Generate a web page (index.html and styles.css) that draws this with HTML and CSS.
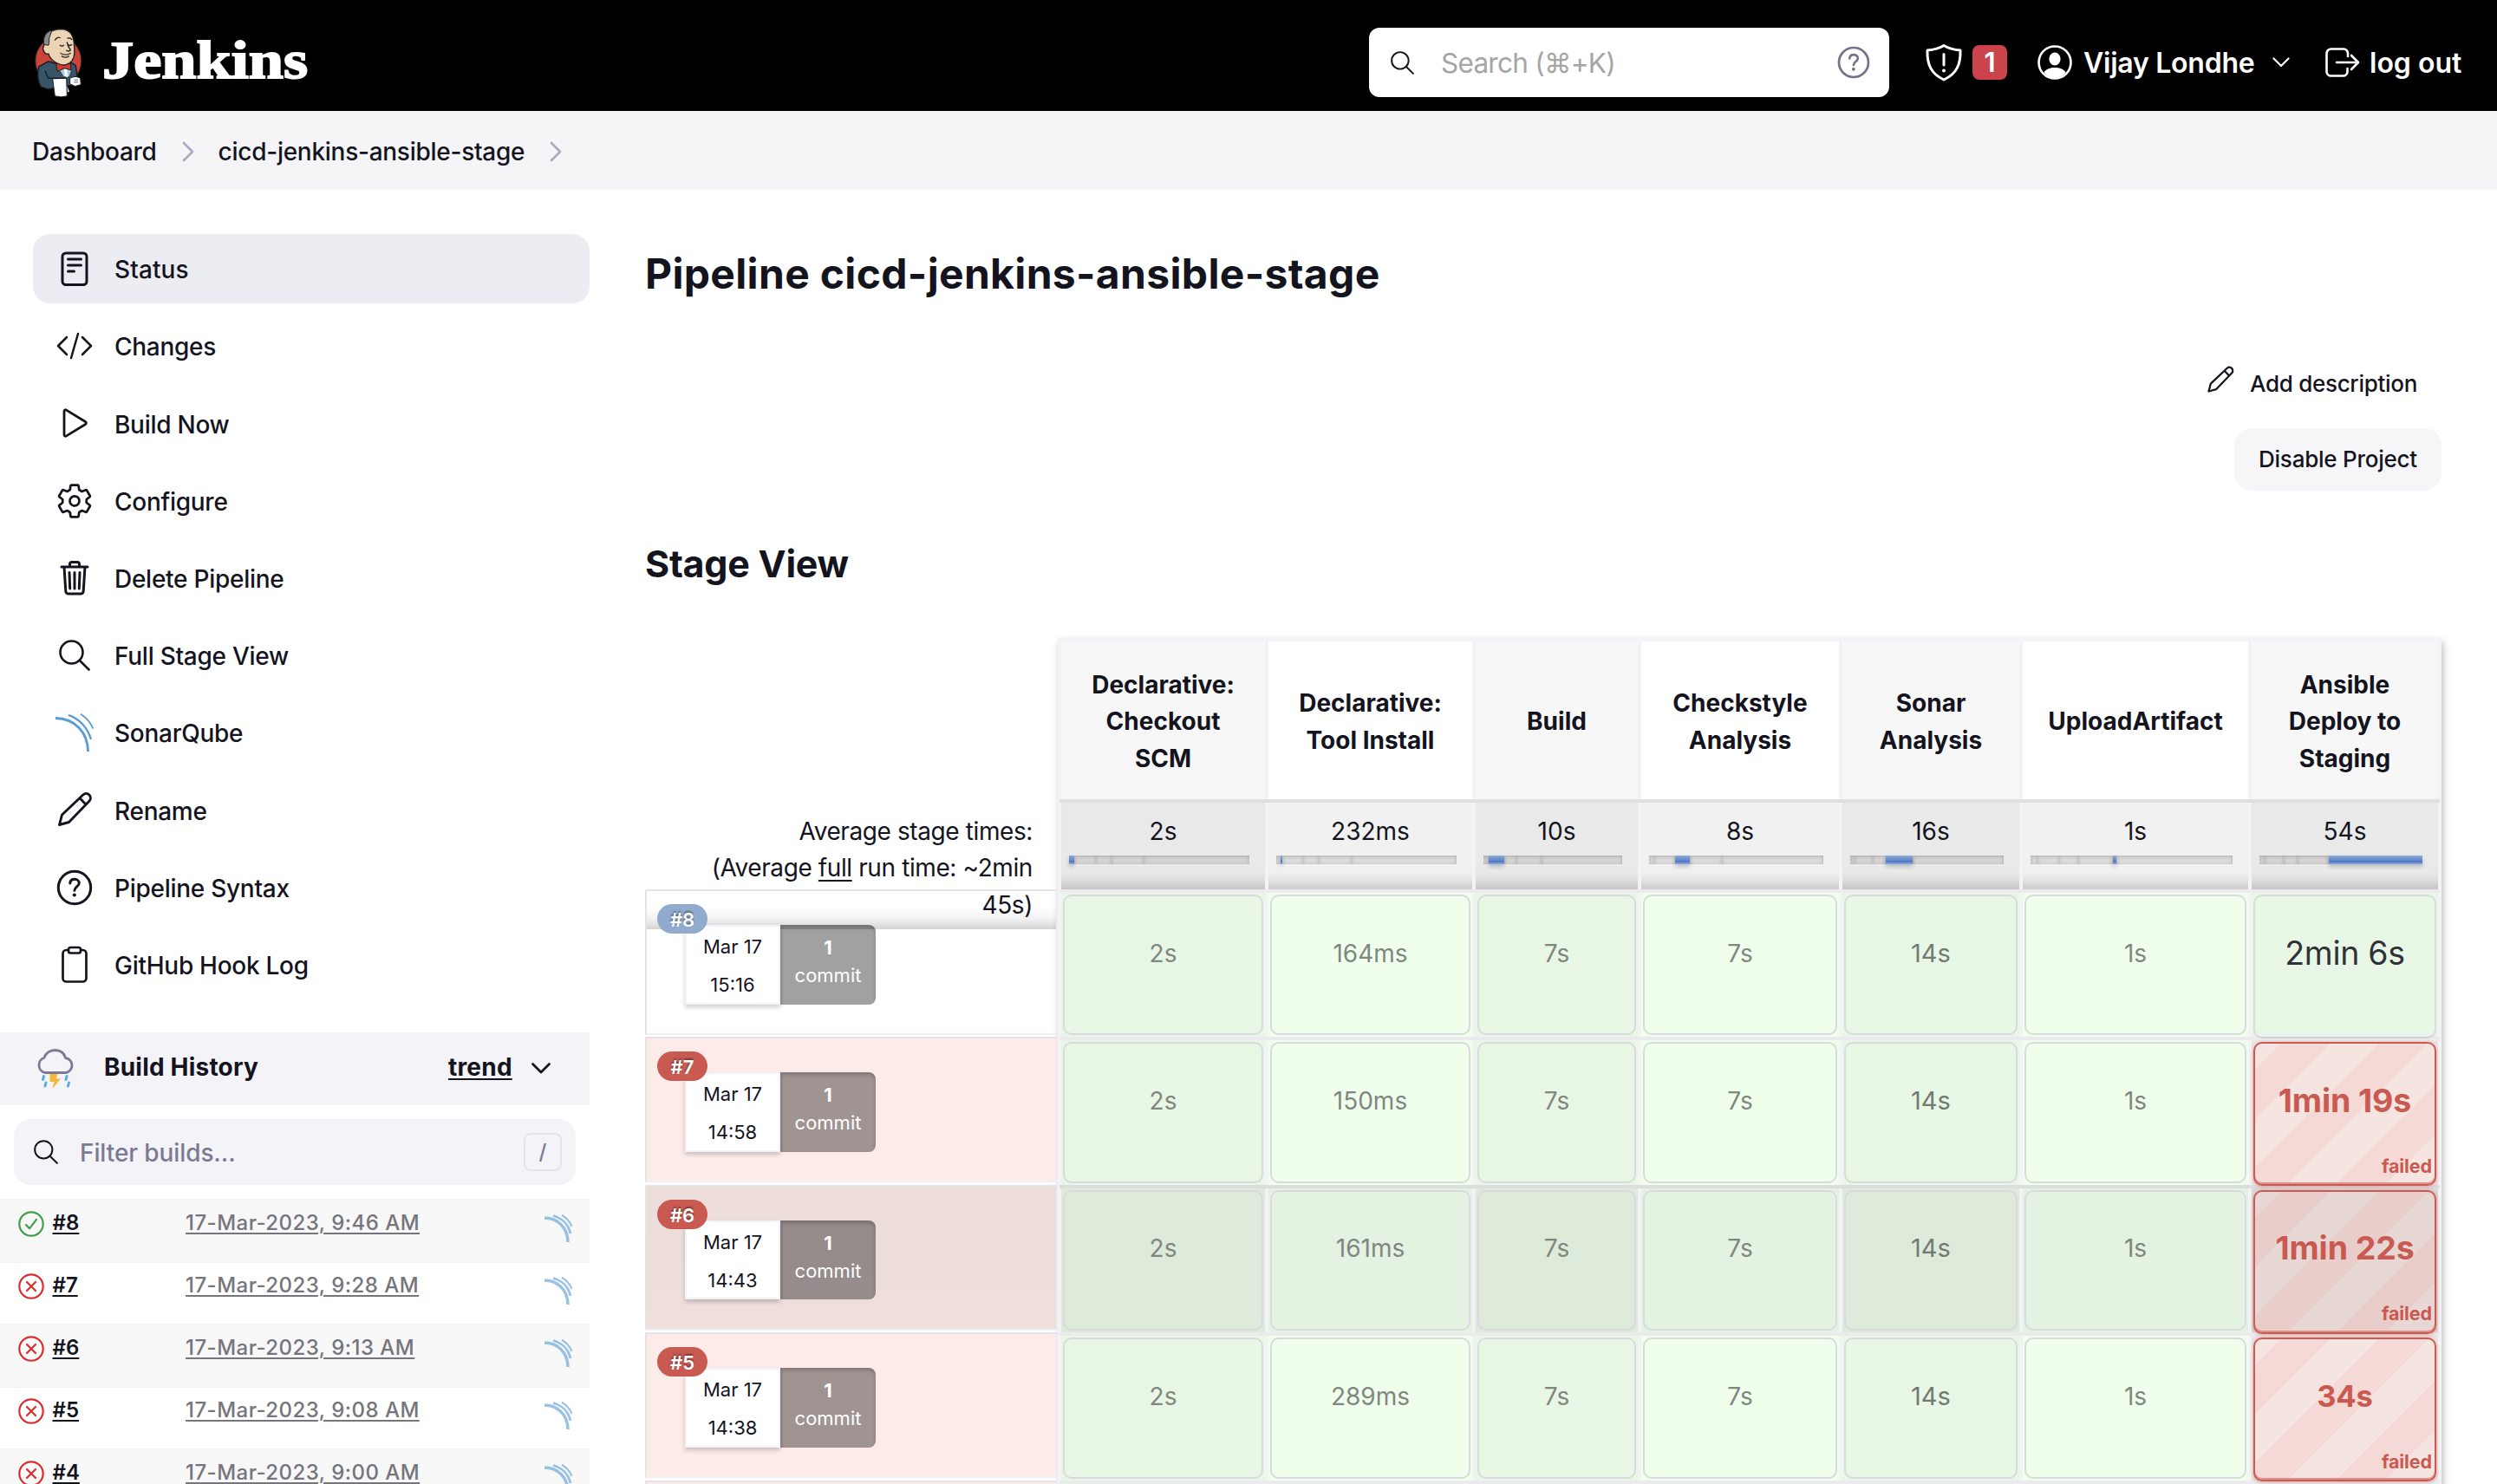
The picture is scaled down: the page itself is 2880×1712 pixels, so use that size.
FILE: index.html
```html
<!DOCTYPE html>
<html lang="en">
<head>
<meta charset="utf-8">
<title>cicd-jenkins-ansible-stage [Jenkins]</title>
<link rel="stylesheet" href="styles.css">
</head>
<body>
<svg class="sprite" aria-hidden="true">
  <symbol id="i-search" viewBox="0 0 36 36"><g fill="none" stroke="currentColor" stroke-width="2.6" stroke-linecap="round"><circle cx="14.5" cy="14.5" r="13"/><path d="M24 24l10.500 10.500"/></g></symbol>
  <symbol id="i-doc" viewBox="0 0 44 44"><g fill="none" stroke="currentColor" stroke-width="3" stroke-linecap="round"><rect x="8" y="4" width="28" height="36.500" rx="4"/><path d="M14.500 11h15M14.500 18h15M14.500 25h7"/></g></symbol>
  <symbol id="i-code" viewBox="0 0 44 44"><path fill="none" stroke="currentColor" stroke-width="2.500" stroke-linecap="round" stroke-linejoin="round" d="M13 12L3 22l10 10M31 12l10 10-10 10M26 8l-8 28"/></symbol>
  <symbol id="i-play" viewBox="0 0 44 44"><path fill="none" stroke="currentColor" stroke-width="2.800" stroke-linejoin="round" d="M10 8.500v27c0 1.600 1.400 2.100 2.600 1.400L34.500 23.500c1.200-.8 1.200-2.200 0-3L12.600 7.100C11.400 6.400 10 6.900 10 8.500z"/></symbol>
  <symbol id="i-gear" viewBox="0 0 512 512"><path fill="none" stroke="currentColor" stroke-linecap="round" stroke-linejoin="round" stroke-width="32" d="M262.290 192.310a64 64 0 1057.400 57.400 64.130 64.130 0 00-57.400-57.400zM416.390 256a154.340 154.340 0 01-1.530 20.790l45.210 35.460a10.810 10.810 0 012.450 13.750l-42.770 74a10.810 10.810 0 01-13.140 4.590l-44.900-18.080a16.110 16.110 0 00-15.170 1.750A164.480 164.480 0 01325 400.800a15.940 15.940 0 00-8.820 12.140l-6.730 47.890a11.080 11.080 0 01-10.680 9.170h-85.540a11.110 11.110 0 01-10.690-8.870l-6.720-47.820a16.070 16.070 0 00-9-12.220 155.300 155.300 0 01-21.460-12.570 16 16 0 00-15.110-1.710l-44.890 18.070a10.810 10.810 0 01-13.140-4.580l-42.770-74a10.800 10.800 0 012.450-13.750l38.210-30a16.050 16.050 0 006-14.080c-.36-4.170-.58-8.330-.58-12.500s.21-8.270.58-12.350a16 16 0 00-6.070-13.940l-38.190-30A10.810 10.810 0 0149.480 186l42.770-74a10.810 10.810 0 0113.140-4.590l44.900 18.080a16.110 16.110 0 0015.170-1.750A164.480 164.480 0 01187 111.200a15.940 15.940 0 008.820-12.140l6.730-47.890A11.080 11.080 0 01213.230 42h85.540a11.110 11.110 0 0110.690 8.870l6.720 47.820a16.070 16.070 0 009 12.220 155.300 155.300 0 0121.460 12.570 16 16 0 0015.110 1.710l44.890-18.070a10.810 10.810 0 0113.140 4.580l42.770 74a10.800 10.800 0 01-2.450 13.750l-38.210 30a16.050 16.050 0 00-6.050 14.080c.33 4.140.55 8.300.55 12.470z"/></symbol>
  <symbol id="i-trash" viewBox="0 0 44 44"><path fill="none" stroke="currentColor" stroke-width="3" stroke-linecap="round" stroke-linejoin="round" d="M10 9l1.800 28a3 3 0 003 3h14.400a3 3 0 003-3L34 9M7 9h30M22 15.500v18.500M16 15.500l.7 18.500M28 15.500l-.7 18.500M16.500 9V6a2.500 2.500 0 012.500-2.500h6A2.500 2.500 0 0127.500 6v3"/></symbol>
  <symbol id="i-sonar" viewBox="0 0 44 44"><g fill="none" stroke="#5a9bd5"><path stroke-width="2.800" d="M0 5.500C22 5.500 37.500 22 37.500 44"/><path stroke-width="2.300" d="M15 1.800C27 6 37 16 41 30"/><path stroke-width="1.800" d="M29 .8C35.500 5 40.500 10.500 43.200 17.500"/></g></symbol>
  <symbol id="i-wave" viewBox="0 0 32 32"><g fill="none" stroke="#6fa9da"><path stroke-width="3.400" d="M0 4C15 4 27 15.500 27 32"/><path stroke-width="2.800" d="M10 1.500C20 4 27.500 11.500 30 22"/><path stroke-width="2.200" d="M20 .8C25.500 4 29.500 8.500 31.500 14"/></g></symbol>
  <symbol id="i-pencil" viewBox="0 0 44 44"><path fill="none" stroke="currentColor" stroke-width="2.900" stroke-linecap="round" stroke-linejoin="round" d="M4.500 39.500L7.500 28 32 4.800c2-1.800 5-1.700 6.900.2s2 5 .2 6.900L15.500 36.500zM28 8.800l7 7.200"/></symbol>
  <symbol id="i-help" viewBox="0 0 44 44"><circle cx="22" cy="22" r="18.700" fill="none" stroke="currentColor" stroke-width="3"/><path fill="none" stroke="currentColor" stroke-width="3" stroke-linecap="round" stroke-linejoin="round" d="M16.800 17c.2-3 2.500-4.700 5.300-4.700s5.200 1.800 5.200 4.500c0 4-5.400 4.300-5.400 8.500"/><circle cx="21.800" cy="30.500" r="2.100" fill="currentColor"/></symbol>
  <symbol id="i-clip" viewBox="0 0 44 44"><g fill="none" stroke="currentColor" stroke-width="2.700" stroke-linejoin="round"><path d="M29 5h2.500a4 4 0 014 4v28.500a4 4 0 01-4 4h-19a4 4 0 01-4-4V9a4 4 0 014-4H15"/><rect x="15" y="2" width="14" height="6.500" rx="2.500"/></g></symbol>
  <symbol id="i-ok" viewBox="0 0 30 30"><g fill="none" stroke="#3f9f4a" stroke-width="2.200" stroke-linecap="round" stroke-linejoin="round"><circle cx="15" cy="15" r="13.700"/><path d="M9 16l4 4.300 8-10.500"/></g></symbol>
  <symbol id="i-bad" viewBox="0 0 30 30"><g fill="none" stroke="#d8302f" stroke-width="2.200" stroke-linecap="round"><circle cx="15" cy="15" r="13.700"/><path d="M10 10l10 10M20 10L10 20"/></g></symbol>
</svg>

<header class="topbar">
  <a class="brand">
    <svg class="butler" viewBox="42 34 174 242">
      <ellipse cx="130" cy="148" rx="80" ry="84" fill="#c9443b" stroke="#1d1d1d" stroke-width="4"/>
      <path d="M62 168l34-18 26 8 46-8 22 14 6 44-20 24-82 14-24-8c-12-20-14-44-8-70z" fill="#375469" stroke="#16191d" stroke-width="4"/>
      <path d="M80 94c-4-30 14-54 58-56 34 0 44 24 46 48 2 26 4 46-6 60-10 16-30 20-46 14-18-8-32-20-36-36-14 4-24-16-16-30z" fill="#ecd5b5" stroke="#1d1d1d" stroke-width="4"/>
      <path d="M80 92c-4-26 6-44 28-50l-8 22c-4 8 0 20-4 30z" fill="#8a8a8e" stroke="#1d1d1d" stroke-width="3"/>
      <path d="M118 76q8-12 18-8M162 70q8-4 14 4M136 94q6 6 12 0M164 92q6 6 12 0M160 84q2 14 12 26-6 8-14 2M138 122q18 10 34 0M142 132q12 8 24 0" fill="none" stroke="#2a2320" stroke-width="4" stroke-linecap="round"/>
      <path d="M132 178l24-6 20 8-8 24-20 0z" fill="#a5c8de" stroke="#1d1d1d" stroke-width="2"/>
      <path d="M150 176l10 0 2 30-10-6z" fill="#fff"/>
      <path d="M122 156l26 8 24-8 2 24-22-6-26 10z" fill="#d0392f" stroke="#1d1d1d" stroke-width="3"/>
      <path d="M110 210l48-2 2 62q-20 6-42 0z" fill="#fff" stroke="#1d1d1d" stroke-width="3"/>
      <path d="M170 208q20-10 36 0l2 22-20 6-18-8z" fill="#fff" stroke="#1d1d1d" stroke-width="3"/>
      <path d="M160 234l8 20-6 4z" fill="#ddd"/>
      <path d="M184 214h14M184 222h14" stroke="#444" stroke-width="2.500"/>
      <path d="M84 182l10 26 60 0" fill="none" stroke="#16191d" stroke-width="4"/>
    </svg>
    <span class="wordmark">Jenkins</span>
  </a>
  <div class="search">
    <svg class="search-mag"><use href="#i-search"/></svg>
    <span class="search-text">Search (⌘+K)</span>
    <svg class="search-help"><use href="#i-help"/></svg>
  </div>
  <div class="security">
    <svg class="shield" viewBox="0 0 44 44"><g fill="none" stroke="#fff" stroke-width="3" stroke-linejoin="round" stroke-linecap="round"><path d="M22 2.500c-5.500 3.500-12 5-19 5.500-.5 16 4 27 19 34 15-7 19.500-18 19-34-7-.5-13.500-2-19-5.500z"/><path d="M22 12.500v12.500" /></g><circle cx="22" cy="31.500" r="2" fill="#fff"/></svg>
    <span class="alert-count">1</span>
  </div>
  <div class="user">
    <svg class="avatar" viewBox="0 0 40 40"><circle cx="20" cy="20" r="18.500" fill="none" stroke="#fff" stroke-width="2.600"/><ellipse cx="20" cy="16" rx="6.600" ry="7.500" fill="#fff"/><path d="M7.500 31.500C10 27.500 14.500 26 20 26s10 1.500 12.500 5.500C29.500 35.500 25 38 20 38s-9.500-2.500-12.500-6.500z" fill="#fff"/></svg>
    <span class="user-name">Vijay Londhe</span>
    <svg class="user-chev" viewBox="0 0 20 12"><path d="M1.500 1.500L10 10l8.500-8.500" fill="none" stroke="#fff" stroke-width="2.200" stroke-linecap="round" stroke-linejoin="round"/></svg>
  </div>
  <div class="logout">
    <svg class="exit" viewBox="0 0 40 34"><path d="M26 10V6.500a5 5 0 00-5-5H6.500a5 5 0 00-5 5v21a5 5 0 005 5H20.500a5 5 0 005-5V24M30 9l8 8-8 8M13 17h24" fill="none" stroke="#fff" stroke-width="2.600" stroke-linecap="round" stroke-linejoin="round"/></svg>
    <span class="logout-text">log out</span>
  </div>
</header>

<nav class="crumbs">
  <span class="crumb">Dashboard</span>
  <svg class="crumb-chev" viewBox="0 0 14 24"><path d="M2 2l10 10L2 22" fill="none" stroke="#a9a9c0" stroke-width="2.600" stroke-linecap="round" stroke-linejoin="round"/></svg>
  <span class="crumb">cicd-jenkins-ansible-stage</span>
  <svg class="crumb-chev" viewBox="0 0 14 24"><path d="M2 2l10 10L2 22" fill="none" stroke="#a9a9c0" stroke-width="2.600" stroke-linecap="round" stroke-linejoin="round"/></svg>
</nav>

<div class="page">
  <aside class="side">
    <ul class="tasks">
      <li class="task task-on"><svg class="task-icon"><use href="#i-doc"/></svg><span>Status</span></li>
      <li class="task"><svg class="task-icon"><use href="#i-code"/></svg><span>Changes</span></li>
      <li class="task"><svg class="task-icon"><use href="#i-play"/></svg><span>Build Now</span></li>
      <li class="task"><svg class="task-icon"><use href="#i-gear"/></svg><span>Configure</span></li>
      <li class="task"><svg class="task-icon"><use href="#i-trash"/></svg><span>Delete Pipeline</span></li>
      <li class="task"><svg class="task-icon task-mag"><use href="#i-search"/></svg><span>Full Stage View</span></li>
      <li class="task"><svg class="task-icon"><use href="#i-sonar"/></svg><span>SonarQube</span></li>
      <li class="task"><svg class="task-icon"><use href="#i-pencil"/></svg><span>Rename</span></li>
      <li class="task"><svg class="task-icon"><use href="#i-help"/></svg><span>Pipeline Syntax</span></li>
      <li class="task"><svg class="task-icon"><use href="#i-clip"/></svg><span>GitHub Hook Log</span></li>
    </ul>
    <section class="history">
      <div class="history-head">
        <svg class="storm" viewBox="0 0 46 46"><path d="M11 27.500a9 9 0 01-1-17.300C11.500 5 16.500 1.500 22.500 1.500S33 5 34.500 10.500A8.600 8.600 0 0135 27.500z" fill="none" stroke="#7a7a94" stroke-width="2.800" stroke-linejoin="round"/><path d="M16.500 29h9l-2 5.500h5.500L19.500 46l2-8h-5z" fill="#f5b63c"/><path d="M9.500 31.500l-1 4M12 39l-1 4M36 31.500l-1 4M38.500 39l-1 4" stroke="#5ca9e6" stroke-width="3" stroke-linecap="round"/></svg>
        <span class="history-title">Build History</span>
        <span class="trend">trend</span>
        <svg class="trend-chev" viewBox="0 0 22 13"><path d="M1.500 1.500L11 11l9.500-9.500" fill="none" stroke="#14141f" stroke-width="2.800" stroke-linecap="round" stroke-linejoin="round"/></svg>
      </div>
      <div class="filter">
        <svg class="filter-mag"><use href="#i-search"/></svg>
        <span class="filter-text">Filter builds...</span>
        <span class="filter-key">/</span>
      </div>
      <div class="builds">
        <div class="build"><svg class="ball"><use href="#i-ok"/></svg><span class="num">#8</span><span class="date">17-Mar-2023, 9:46 AM</span><svg class="wave"><use href="#i-wave"/></svg></div>
        <div class="build"><svg class="ball"><use href="#i-bad"/></svg><span class="num">#7</span><span class="date">17-Mar-2023, 9:28 AM</span><svg class="wave"><use href="#i-wave"/></svg></div>
        <div class="build"><svg class="ball"><use href="#i-bad"/></svg><span class="num">#6</span><span class="date">17-Mar-2023, 9:13 AM</span><svg class="wave"><use href="#i-wave"/></svg></div>
        <div class="build"><svg class="ball"><use href="#i-bad"/></svg><span class="num">#5</span><span class="date">17-Mar-2023, 9:08 AM</span><svg class="wave"><use href="#i-wave"/></svg></div>
        <div class="build"><svg class="ball"><use href="#i-bad"/></svg><span class="num">#4</span><span class="date">17-Mar-2023, 9:00 AM</span><svg class="wave"><use href="#i-wave"/></svg></div>
      </div>
    </section>
  </aside>

  <main class="main">
    <h1 class="title">Pipeline cicd-jenkins-ansible-stage</h1>
    <div class="actions">
      <a class="describe"><svg class="describe-icon"><use href="#i-pencil"/></svg><span>Add description</span></a>
      <button class="disable">Disable Project</button>
    </div>
    <h2 class="subtitle">Stage View</h2>

    <div class="pipeline">
      <div class="runs">
        <div class="averages">Average stage times:<br>(Average <u>full</u> run time: ~2min<br>45s)</div>
        <div class="run"><span class="badge">#8</span><div class="when"><span>Mar 17</span><span>15:16</span></div><div class="commits"><b>1</b><span>commit</span></div></div>
        <div class="run run-bad"><span class="badge badge-bad">#7</span><div class="when"><span>Mar 17</span><span>14:58</span></div><div class="commits"><b>1</b><span>commit</span></div></div>
        <div class="run run-bad run-hover"><span class="badge badge-bad">#6</span><div class="when"><span>Mar 17</span><span>14:43</span></div><div class="commits"><b>1</b><span>commit</span></div></div>
        <div class="run run-bad"><span class="badge badge-bad">#5</span><div class="when"><span>Mar 17</span><span>14:38</span></div><div class="commits"><b>1</b><span>commit</span></div></div>
        <div class="run run-bad"></div>
      </div>

      <div class="stages">
        <div class="row names">
          <div class="name">Declarative:<br>Checkout<br>SCM</div>
          <div class="name">Declarative:<br>Tool Install</div>
          <div class="name">Build</div>
          <div class="name">Checkstyle<br>Analysis</div>
          <div class="name">Sonar<br>Analysis</div>
          <div class="name">UploadArtifact</div>
          <div class="name">Ansible<br>Deploy to<br>Staging</div>
        </div>
        <div class="row totals">
          <div class="total"><span>2s</span><div class="bar"><i class="now" style="flex-grow:6"></i><i style="flex-grow:25"></i><i style="flex-grow:18"></i><i style="flex-grow:37"></i><i style="flex-grow:122"></i></div></div>
          <div class="total"><span>232ms</span><div class="bar"><i style="flex-grow:5"></i><i class="now" style="flex-grow:2"></i><i style="flex-grow:24"></i><i style="flex-grow:18"></i><i style="flex-grow:38"></i><i style="flex-grow:121"></i></div></div>
          <div class="total"><span>10s</span><div class="bar"><i style="flex-grow:6"></i><i class="now" style="flex-grow:18"></i><i style="flex-grow:14"></i><i style="flex-grow:29"></i><i style="flex-grow:93"></i></div></div>
          <div class="total"><span>8s</span><div class="bar"><i style="flex-grow:6"></i><i style="flex-grow:24"></i><i class="now" style="flex-grow:17"></i><i style="flex-grow:37"></i><i style="flex-grow:117"></i></div></div>
          <div class="total"><span>16s</span><div class="bar"><i style="flex-grow:5"></i><i style="flex-grow:21"></i><i style="flex-grow:15"></i><i class="now" style="flex-grow:31"></i><i style="flex-grow:106"></i></div></div>
          <div class="total"><span>1s</span><div class="bar"><i style="flex-grow:8"></i><i style="flex-grow:25"></i><i style="flex-grow:22"></i><i style="flex-grow:40"></i><i class="now" style="flex-grow:4"></i><i style="flex-grow:134"></i></div></div>
          <div class="total"><span>54s</span><div class="bar"><i style="flex-grow:6"></i><i style="flex-grow:22"></i><i style="flex-grow:16"></i><i style="flex-grow:36"></i><i class="now" style="flex-grow:109"></i></div></div>
        </div>
        <div class="row jobs jobs-first">
          <div class="cell"><span class="box">2s</span></div><div class="cell"><span class="box">164ms</span></div><div class="cell"><span class="box">7s</span></div><div class="cell"><span class="box">7s</span></div><div class="cell"><span class="box box-mid">14s</span></div><div class="cell"><span class="box">1s</span></div><div class="cell"><span class="box box-long">2min 6s</span></div>
        </div>
        <div class="row jobs">
          <div class="cell"><span class="box">2s</span></div><div class="cell"><span class="box">150ms</span></div><div class="cell"><span class="box">7s</span></div><div class="cell"><span class="box">7s</span></div><div class="cell"><span class="box box-mid">14s</span></div><div class="cell"><span class="box">1s</span></div><div class="cell cell-bad"><span class="box box-bad">1min 19s<em>failed</em></span></div>
        </div>
        <div class="row jobs jobs-hover">
          <div class="cell"><span class="box">2s</span></div><div class="cell"><span class="box">161ms</span></div><div class="cell"><span class="box">7s</span></div><div class="cell"><span class="box">7s</span></div><div class="cell"><span class="box box-mid">14s</span></div><div class="cell"><span class="box">1s</span></div><div class="cell cell-bad"><span class="box box-bad">1min 22s<em>failed</em></span></div>
        </div>
        <div class="row jobs">
          <div class="cell"><span class="box">2s</span></div><div class="cell"><span class="box">289ms</span></div><div class="cell"><span class="box">7s</span></div><div class="cell"><span class="box">7s</span></div><div class="cell"><span class="box box-mid">14s</span></div><div class="cell"><span class="box">1s</span></div><div class="cell cell-bad"><span class="box box-bad box-short">34s<em>failed</em></span></div>
        </div>
        <div class="row jobs">
          <div class="cell"></div><div class="cell"></div><div class="cell"></div><div class="cell"></div><div class="cell"></div><div class="cell"></div><div class="cell cell-bad"></div>
        </div>
      </div>
    </div>
  </main>
</div>
</body>
</html>
```
FILE: styles.css
```css
* { box-sizing: border-box; }

body {
  margin: 0;
  height: 1712px;
  overflow: hidden;
  background: #fff;
  color: #14141f;
  font-family: Inter, "Liberation Sans", sans-serif;
  font-size: 28px;
}

.sprite { position: absolute; width: 0; height: 0; }
svg { display: block; flex: none; }

/* Top bar */
.topbar {
  display: flex;
  align-items: center;
  height: 128px;
  padding: 0 41px 0 38px;
  background: #000;
  color: #fff;
  font-size: 32px;
  font-weight: 600;
  white-space: nowrap;
}
.brand { display: flex; align-items: center; gap: 22px; height: 100%; }
.butler { width: 58px; height: 81px; margin-top: 16px; }
.wordmark {
  width: 241px;
  font: bold 61px/1 "Liberation Serif", serif;
  transform: scaleX(1.185);
  transform-origin: left;
  -webkit-text-stroke: 1.8px #fff;
  margin-top: 11px;
}
.search {
  display: flex;
  align-items: center;
  width: 600px;
  height: 80px;
  margin: 16px 41px 0 auto;
  padding: 0 22px 0 25px;
  border-radius: 12px;
  background: #fff;
  color: #a5a5a5;
  font-weight: 400;
}
.search-mag { width: 27px; height: 27px; color: #14141f; }
.search-text { margin-left: 31px; font-size: 31.500px; letter-spacing: -.75px; }
.search-help { width: 40px; height: 40px; margin-left: auto; color: #73738c; margin-right: -1px; }
.security, .user, .logout { display: flex; align-items: center; padding-top: 16px; }
.security { gap: 11px; width: 130px; }
.shield { width: 44px; height: 44px; }
.alert-count {
  width: 40px;
  height: 40px;
  border-radius: 8px;
  background: #cc444b;
  text-align: center;
  line-height: 40px;
  font-size: 31px;
}
.user { width: 332px; }
.avatar { width: 40px; height: 40px; }
.user-name { margin-left: 13px; width: 198px; letter-spacing: -.25px; font-weight: 620; }
.user-chev { width: 20px; height: 12px; margin-left: 20px; }
.exit { width: 40px; height: 34px; }
.logout-text { margin-left: 11px; width: 106px; font-weight: 620; }

/* Breadcrumbs */
.crumbs {
  display: flex;
  align-items: center;
  height: 91px;
  padding: 2px 0 0 37px;
  background: #f5f5f8;
  font-weight: 450;
  letter-spacing: -.27px;
}
.crumb-chev { width: 14px; height: 24px; margin: 0 28px 0 29px; }

.page { display: flex; align-items: flex-start; }

/* Sidebar */
.side { width: 680px; padding-top: 51px; flex: none; }
.tasks {
  display: flex;
  flex-direction: column;
  gap: 9.200px;
  margin: 0 0 38px;
  padding: 0 0 0 38px;
  list-style: none;
}
.task {
  display: flex;
  align-items: center;
  height: 80px;
  padding-left: 26px;
  border-radius: 20px;
  font-weight: 450;
  letter-spacing: -.27px;
}
.task span { padding-top: 2.500px; }
.task-on { background: #ecedf3; font-weight: 550; letter-spacing: .1px; }
.task-icon { width: 44px; height: 44px; margin-right: 24px; overflow: visible; }
.task-mag { width: 36px; height: 36px; margin: 0 28px 0 4px; }

.history-head {
  display: flex;
  align-items: center;
  height: 84px;
  padding-left: 41px;
  background: #f3f3f8;
  font-weight: 650;
}
.storm { width: 46px; height: 46px; }
.history-title { margin: -3px 0 0 33px; width: 397px; letter-spacing: .2px; }
.trend { margin-top: -3px; width: 74px; text-decoration: underline; text-decoration-thickness: 2px; text-underline-offset: 3px; letter-spacing: .2px; }
.trend-chev { width: 22px; height: 13px; margin-left: 22px; }
.filter {
  display: flex;
  align-items: center;
  height: 76px;
  margin: 16px;
  padding: 0 16px 0 23px;
  border-radius: 20px;
  background: #f3f3f8;
  color: #7a7a92;
  font-weight: 450;
  letter-spacing: -.1px;
}
.filter-mag { width: 28px; height: 28px; color: #14141f; }
.filter-text { margin-left: 25px; padding-top: 3px; }
.filter-key {
  width: 44px;
  height: 44px;
  margin-left: auto;
  border: 2px solid #e3e3ed;
  border-radius: 8px;
  text-align: center;
  font-size: 24px;
  line-height: 40px;
}
.build {
  display: flex;
  height: 72px;
  padding: 12px 0 0 21px;
  border-top: 2px solid #f3f3f8;
  line-height: 28px;
}
.build:nth-child(odd) { background: #f8f8f8; }
.ball { width: 30px; height: 30px; margin-right: 9.500px; }
.num, .date { font-size: 24px; text-decoration: underline; text-decoration-thickness: 2px; text-underline-offset: 3px; white-space: nowrap; }
.num { width: 153.500px; font-weight: 600; }
.date { width: 413.500px; font-weight: 500; color: #75757c; letter-spacing: .47px; }
.wave { width: 32px; height: 32px; margin-top: 4px; opacity: .7; }

/* Main column */
.main { width: 2136px; padding-left: 64px; flex: none; }
.title { margin: 68px 0 0; font-size: 48px; line-height: 58px; font-weight: 700; letter-spacing: .33px; white-space: nowrap; }
.actions { display: flex; flex-direction: column; align-items: flex-end; }
.describe { display: flex; align-items: center; height: 58px; margin-top: 68px; padding-right: 28px; font-size: 26px; font-weight: 500; letter-spacing: -.3px; }
.describe-icon { width: 34px; height: 34px; margin: -8px 17px 0 0; }
.disable {
  width: 239px;
  height: 72px;
  margin-top: 23px;
  padding: 0 0 1px;
  border: 0;
  border-radius: 20px;
  background: #f6f6f9;
  color: inherit;
  font: 500 26px Inter, sans-serif;
  letter-spacing: -.24px;
}
.subtitle { margin: 56px 0 58px; font-size: 43px; line-height: 56px; font-weight: 700; letter-spacing: -.25px; }

/* Stage view */
.pipeline { display: flex; align-items: flex-start; }
.runs { width: 476px; padding-top: 190px; flex: none; }
.averages {
  height: 146px;
  margin-bottom: -46px;
  padding: 12px 29px 0 0;
  text-align: right;
  line-height: 42.300px;
  letter-spacing: -.4px;
  background: linear-gradient(to top, rgba(0,0,0,.17), rgba(0,0,0,.05) 12px, rgba(0,0,0,0) 26px);
}
.averages u { text-decoration-thickness: 2px; text-underline-offset: 4px; }
.run {
  position: relative;
  display: flex;
  height: 168px;
  margin-bottom: 2.400px;
  padding: 39px 0 0 44px;
  border: 2px solid #e4e4e6;
  border-right-color: #ececef;
  border-bottom-color: #f0f0f2;
}
.run-bad { background: #fdebe9; }
.run-hover { background: linear-gradient(#ecdcda, #eedfdd); }
.badge {
  position: absolute;
  left: 12px;
  top: 15px;
  z-index: 1;
  width: 58px;
  height: 34px;
  border-radius: 17px;
  background: #90abcd;
  color: #fff;
  font-size: 22px;
  font-weight: 600;
  line-height: 36px;
  text-align: center;
  text-shadow: 0 -2px 2px rgba(0,0,0,.4);
}
.badge-bad { background: #c95a52; }
.when, .commits { width: 110px; height: 91.500px; font-size: 22px; text-align: center; }
.when {
  display: flex;
  flex-direction: column;
  border: 2px solid #f2f2f8;
  padding-top: 1px;
  background: #fff;
  line-height: 44px;
  box-shadow: 0 3px 5px rgba(0,0,0,.2);
}
.commits {
  display: flex;
  flex-direction: column;
  padding-top: 10px;
  border-radius: 0 8px 8px 0;
  background: rgba(0,0,0,.37);
  color: #fff;
  line-height: 32px;
  box-shadow: inset 0 3px 4px rgba(0,0,0,.2);
}

.stages {
  width: 1596px;
  margin-right: -4px;
  border: 2px solid #f2f2f7;
  box-shadow: 2px 4px 8px rgba(0,0,0,.26);
}
.row { display: grid; grid-template-columns: 239px 239px 191px 232px 208px 264px 219px; }
.row > div { border: solid #f3f3f5; border-width: 0 2px; }
.row > div:nth-child(odd) { background-image: linear-gradient(rgba(0,0,0,.03), rgba(0,0,0,.03)); }
.names { height: 184px; border-top: 2px solid #f5f5f8; }
.name { display: grid; place-items: center; text-align: center; font-weight: 650; line-height: 42.200px; padding-top: 3px; }
.totals { height: 104px; border-top: 4px solid #e0e0e1; }
.total {
  display: flex;
  flex-direction: column;
  padding: 12px 18px 0 9px;
  line-height: 42.300px;
  background-color: #f1f1f1;
  box-shadow: inset 0 -20px 16px -14px rgba(0,0,0,.2);
}
.total span { text-align: center; margin: 0 -18px 0 -9px; }
.bar { display: flex; height: 10px; margin-top: 6.700px; }
.bar i { flex-basis: 0; background: rgba(0,0,0,.09); box-shadow: inset 0 1px 4px rgba(0,0,0,.2); }
.bar .now { background: linear-gradient(#8fadd2, #4f76c8 75%, #7f9fdc 80%); box-shadow: 0 3px 5px rgba(0,0,0,.2); }

.jobs { height: 170.500px; border-top: 4px solid #ebebed; }
.jobs-first { height: 170px; }
.cell { display: flex; padding: 2px; background-color: #f0ffec; }
.row > .cell-bad { background: #f5ecec; }
.box {
  position: relative;
  flex: 1;
  border: 2px solid #dad9dd;
  border-radius: 10px;
  padding-top: 44.500px;
  text-align: center;
  line-height: 42px;
  color: #80877f;
  white-space: nowrap;
}
.box-mid { font-size: 29px; color: #737a73; }
.box-long {
  margin-bottom: -3.500px;
  border-bottom-color: #cfd3cf;
  box-shadow: inset 0 -4px 0 -1px #eef0f2;
  font-size: 37.500px;
  letter-spacing: -.3px;
  color: #30323a;
}
.jobs-hover { border-top-color: #dcdedd; }
.jobs-hover .cell { background-color: #e4f2e1; }
.jobs-hover .cell-bad { background: #e6dfdf; }
.box-bad {
  margin-bottom: -3.500px;
  border-color: #cb5a52;
  background: repeating-linear-gradient(-45deg, #f6e4e0 0 40px, #f5d9d6 40px 80px);
  color: #c95a52;
  font-size: 37.500px;
  font-weight: 700;
  letter-spacing: -.1px;
  box-shadow: inset 0 -2px 0 #dd8f89, 0 1px 4px rgba(200,80,70,.45);
}
.box-short { font-size: 34.500px; }
.jobs-hover .box-bad { background: repeating-linear-gradient(-45deg, #e8d8d5 0 40px, #e9cdca 40px 80px); }
.box-bad em {
  position: absolute;
  right: 3px;
  bottom: 7.500px;
  font-style: normal;
  font-size: 21.500px;
  font-weight: 650;
  line-height: 28px;
}
```
